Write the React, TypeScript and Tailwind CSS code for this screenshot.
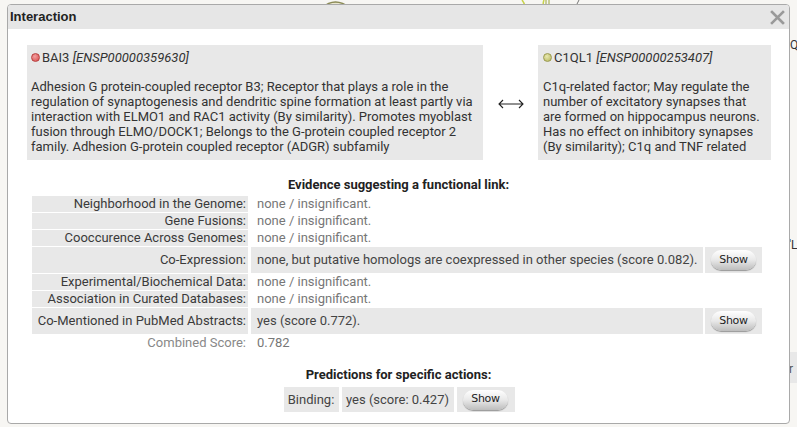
import React from "react";

function ShowBtn() {
  return (
    <span className="inline-flex items-center justify-center w-[45px] h-[20px] rounded-full bg-gradient-to-b from-[#ffffff] via-[#e8e8e8] to-[#bdbdbd] shadow-[0_1px_1px_rgba(0,0,0,0.35)] text-[11px] text-[#222] [font-family:'DejaVu_Sans',sans-serif] tracking-[-0.3px]">
      Show
    </span>
  );
}

type Row = { label: string; value: string; tone: "none" | "dark"; btn?: boolean };

const rows: Row[] = [
  { label: "Neighborhood in the Genome:", value: "none / insignificant.", tone: "none" },
  { label: "Gene Fusions:", value: "none / insignificant.", tone: "none" },
  { label: "Cooccurence Across Genomes:", value: "none / insignificant.", tone: "none" },
  {
    label: "Co-Expression:",
    value: "none, but putative homologs are coexpressed in other species (score 0.082).",
    tone: "dark",
    btn: true,
  },
  { label: "Experimental/Biochemical Data:", value: "none / insignificant.", tone: "none" },
  { label: "Association in Curated Databases:", value: "none / insignificant.", tone: "none" },
  { label: "Co-Mentioned in PubMed Abstracts:", value: "yes (score 0.772).", tone: "dark", btn: true },
];

export default function App() {
  return (
    <div className="relative w-[797px] h-[427px] overflow-hidden bg-[#f7f6f3] [font-family:Roboto,'Liberation_Sans',sans-serif]">
      {/* background page fragments */}
      <svg className="absolute left-0 top-0" width="797" height="8">
        <path d="M322 8 Q335 -4 350 8" fill="#e9e6cf" stroke="#8a8a55" strokeWidth="1.5" />
        <path d="M522 0 Q526 5 524 8" fill="none" stroke="#c8d34a" strokeWidth="1.5" />
        <path d="M544 0 Q542 5 545 8" fill="none" stroke="#c8d34a" strokeWidth="1.5" />
        <line x1="546" y1="0" x2="546" y2="8" stroke="#9aa53a" strokeWidth="1" />
        <line x1="549" y1="0" x2="549" y2="8" stroke="#9aa53a" strokeWidth="1" />
        <path d="M575 8 L579 0" stroke="#777" strokeWidth="1" />
      </svg>
      <span className="absolute left-[790px] top-[36px] text-[12px] text-[#333]">Q</span>
      <span className="absolute left-[789px] top-[236px] text-[12px] text-[#333]">'L</span>
      <div className="absolute left-[790px] top-[352px] w-[10px] h-[31px] bg-[#e8e8e8]" />
      <span className="absolute left-[789px] top-[360px] text-[12px] text-[#555]">r</span>

      {/* dialog */}
      <div className="absolute left-[7px] top-[4px] w-[783px] h-[420px] rounded-[4px] border border-[#a9a9a9] bg-white overflow-hidden">
        <div className="flex items-center justify-between h-[24px] bg-[#e6e6e6] pl-[2px] pr-[3px]">
          <span className="text-[13px] font-bold text-[#222] [font-family:'Liberation_Sans',Arial,sans-serif]">
            Interaction
          </span>
          <svg width="15" height="15" viewBox="0 0 15 15" className="mr-[1px]">
            <path d="M2 2 L13 13 M13 2 L2 13" stroke="#9a9a9a" strokeWidth="2.6" strokeLinecap="square" />
          </svg>
        </div>

        {/* proteins */}
        <div className="flex items-stretch pl-[19px] pt-[16px]">
          <div className="w-[456px] h-[115px] bg-[#e8e8e8] px-[4px] pt-[4px] text-[13px] leading-[15px] text-[#333]">
            <div className="flex items-center h-[17px]">
              <span className="inline-block w-[9px] h-[9px] rounded-full bg-[radial-gradient(circle_at_40%_35%,#f2a0a0,#d64848)] border border-[#b84040] mr-[2px]" />
              <span>BAI3&nbsp;</span>
              <i>[ENSP00000359630]</i>
            </div>
            <div className="mt-[13px]">
              Adhesion G protein-coupled receptor B3; Receptor that plays a role in the regulation of synaptogenesis
              and dendritic spine formation at least partly via interaction with ELMO1 and RAC1 activity (By
              similarity). Promotes myoblast fusion through ELMO/DOCK1; Belongs to the G-protein coupled receptor 2
              family. Adhesion G-protein coupled receptor (ADGR) subfamily
            </div>
          </div>
          <div className="w-[55px] flex items-center justify-center pt-[3px]">
            <svg width="26" height="10" viewBox="0 0 26 10">
              <path d="M1 5 H25 M5 1 L1 5 L5 9 M21 1 L25 5 L21 9" fill="none" stroke="#222" strokeWidth="1.1" />
            </svg>
          </div>
          <div className="w-[233px] h-[115px] bg-[#e8e8e8] px-[5px] pt-[4px] text-[13px] leading-[15px] text-[#333] overflow-hidden">
            <div className="flex items-center h-[17px]">
              <span className="inline-block w-[9px] h-[9px] rounded-full bg-[radial-gradient(circle_at_40%_35%,#e8e8b0,#b5b55a)] border border-[#9a9a50] mr-[2px]" />
              <span>C1QL1&nbsp;</span>
              <i>[ENSP00000253407]</i>
            </div>
            <div className="mt-[13px]">
              C1q-related factor; May regulate the number of excitatory synapses that are formed on hippocampus
              neurons. Has no effect on inhibitory synapses (By similarity); C1q and TNF related
            </div>
          </div>
        </div>

        {/* evidence */}
        <div className="text-center text-[13px] font-bold text-[#222] mt-[16px] leading-[17px]">
          Evidence suggesting a functional link:
        </div>
        <div className="ml-[24px] mt-[3px] grid grid-cols-[216px_453px_57px] gap-x-[2px] gap-y-[1px] text-[13px]">
          {rows.map((r) => (
            <React.Fragment key={r.label}>
              <div
                className={`bg-[#e8e8e8] text-right pr-[2px] text-[#3a3a3a] flex items-center justify-end ${
                  r.btn ? "h-[26px]" : "h-[16px]"
                }`}
              >
                {r.label}
              </div>
              <div
                className={`pl-[6px] flex items-center ml-[1px] ${
                  r.btn ? "h-[26px] bg-[#e8e8e8]" : "h-[16px]"
                } ${r.tone === "none" ? "text-[#777]" : "text-[#444]"}`}
              >
                {r.value}
              </div>
              <div className={`flex items-center justify-center ${r.btn ? "h-[26px] bg-[#e8e8e8]" : "h-[16px]"}`}>
                {r.btn ? <ShowBtn /> : null}
              </div>
            </React.Fragment>
          ))}
          <div className="h-[16px] text-right pr-[2px] text-[#888] flex items-center justify-end">Combined Score:</div>
          <div className="h-[16px] pl-[6px] ml-[1px] text-[#777] flex items-center">0.782</div>
          <div />
        </div>

        {/* predictions */}
        <div className="text-center text-[13px] font-bold text-[#222] mt-[15px] leading-[17px]">
          Predictions for specific actions:
        </div>
        <div className="flex justify-center mt-[4px] gap-[3px] text-[13px] ml-[1px]">
          <div className="w-[55px] h-[25px] bg-[#e8e8e8] flex items-center justify-center text-[#444]">Binding:</div>
          <div className="w-[112px] h-[25px] bg-[#e8e8e8] flex items-center justify-center text-[#444]">
            yes (score: 0.427)
          </div>
          <div className="w-[58px] h-[25px] bg-[#e8e8e8] flex items-center justify-center">
            <ShowBtn />
          </div>
        </div>
      </div>
    </div>
  );
}
